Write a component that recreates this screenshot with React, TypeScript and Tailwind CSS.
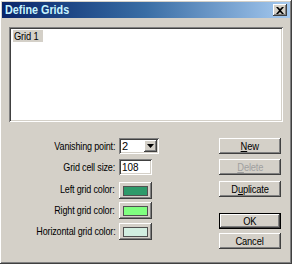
import React from "react";

const raised =
  "shadow-[inset_-1px_-1px_#404040,inset_1px_1px_#ffffff,inset_-2px_-2px_#808080,inset_2px_2px_#d4d0c8]";
const sunken =
  "shadow-[inset_1px_1px_#808080,inset_-1px_-1px_#ffffff,inset_2px_2px_#404040,inset_-2px_-2px_#d4d0c8]";

function Btn({ children, disabled, def, top }: { children: React.ReactNode; disabled?: boolean; def?: boolean; top: string }) {
  return (
    <div
      className={`${top} w-[62px] h-[16px] bg-[#d4d0c8] flex items-center justify-center text-[11px] leading-none ${
        def
          ? "shadow-[inset_1px_1px_#000,inset_-1px_-1px_#000,inset_-2px_-2px_#404040,inset_2px_2px_#ffffff,inset_-3px_-3px_#808080]"
          : raised
      } ${disabled ? "text-[#a0a0a0]" : "text-black"}`}
    >
      <span className="inline-block scale-x-[0.85] tracking-[-0.2px] whitespace-nowrap">{children}</span>
    </div>
  );
}

function Swatch({ color }: { color: string }) {
  return (
    <div className={`w-[33px] h-[17px] bg-[#d4d0c8] ${raised} flex items-center justify-center`}>
      <div className="w-[25px] h-[10px] border border-[#505050]" style={{ background: color }} />
    </div>
  );
}

export default function App() {
  return (
    <div
      className={`w-[292px] h-[264px] bg-[#d4d0c8] ${raised} p-[2px] flex flex-col text-black`}
      style={{ fontFamily: '"Liberation Sans", Arial, sans-serif' }}
    >
      <div className="h-[16px] bg-gradient-to-r from-[#0a246a] via-[#3a6ea5] to-[#a6caf0] flex items-center justify-between pl-[3px] pr-[3px]">
        <span className="inline-block origin-left scale-x-[0.9] text-[12px] font-bold text-[#c8f4ff] leading-none whitespace-nowrap">Define Grids</span>
        <div className={`w-[14px] h-[12px] bg-[#d4d0c8] ${raised} flex items-center justify-center`}>
          <svg width="8" height="7" viewBox="0 0 8 7">
            <path d="M0 0h2l2 2 2-2h2L5 3.5 8 7H6L4 5 2 7H0l3-3.5z" fill="#000" />
          </svg>
        </div>
      </div>
      <div className={`ml-[7px] mt-[9px] w-[274px] h-[95px] bg-white ${sunken} p-[2px]`}>
        <div className="ml-[2px] mt-[1px] w-[30px] h-[12px] bg-[#d4d0c8] text-[11px] leading-[12px] pl-[1px] whitespace-nowrap">
          <span className="inline-block origin-left scale-x-[0.85] tracking-[-0.2px]">Grid 1</span>
        </div>
      </div>
      <div className="flex mt-[16px]">
        <div className="flex flex-col">
          {[
            { label: "Vanishing point:", h: "h-[21px]", kind: "combo" },
            { label: "Grid cell size:", h: "h-[22px]", kind: "input" },
            { label: "Left grid color:", h: "h-[21px]", kind: "c1" },
            { label: "Right grid color:", h: "h-[21px]", kind: "c2" },
            { label: "Horizontal grid color:", h: "h-[21px]", kind: "c3" },
          ].map((r) => (
            <div key={r.label} className={`flex items-start ${r.h}`}>
              <div className="w-[114px] text-right text-[11px] leading-[16px] pr-[1px] whitespace-nowrap">
                <span className="inline-block origin-right scale-x-[0.82] tracking-[-0.2px]">{r.label}</span>
              </div>
              <div className="ml-[3px]">
                {r.kind === "combo" && (
                  <div className={`w-[40px] h-[16px] bg-white ${sunken} flex items-center pl-[3px] pr-[2px]`}>
                    <span className="flex-1 text-[11px] leading-none">2</span>
                    <div className={`w-[13px] h-[12px] bg-[#d4d0c8] ${raised} flex items-center justify-center`}>
                      <svg width="7" height="4" viewBox="0 0 7 4">
                        <path d="M0 0h7L3.5 4z" fill="#000" />
                      </svg>
                    </div>
                  </div>
                )}
                {r.kind === "input" && (
                  <div className={`w-[33px] h-[16px] bg-white ${sunken} flex items-center pl-[3px]`}>
                    <span className="inline-block origin-left scale-x-[0.9] text-[11px] leading-none">108</span>
                  </div>
                )}
                {r.kind === "c1" && <div className="mt-[1px]"><Swatch color="#2e9a6a" /></div>}
                {r.kind === "c2" && <Swatch color="#80ff80" />}
                {r.kind === "c3" && <Swatch color="#d2eee0" />}
              </div>
            </div>
          ))}
        </div>
        <div className="ml-[60px] flex flex-col">
          <Btn top="">
            <span className="underline">N</span>ew
          </Btn>
          <Btn top="mt-[5px]" disabled>
            <span className="underline">D</span>elete
          </Btn>
          <Btn top="mt-[6px]">
            D<span className="underline">u</span>plicate
          </Btn>
          <Btn top="mt-[16px]" def>
            OK
          </Btn>
          <Btn top="mt-[4px]">Cancel</Btn>
        </div>
      </div>
    </div>
  );
}
